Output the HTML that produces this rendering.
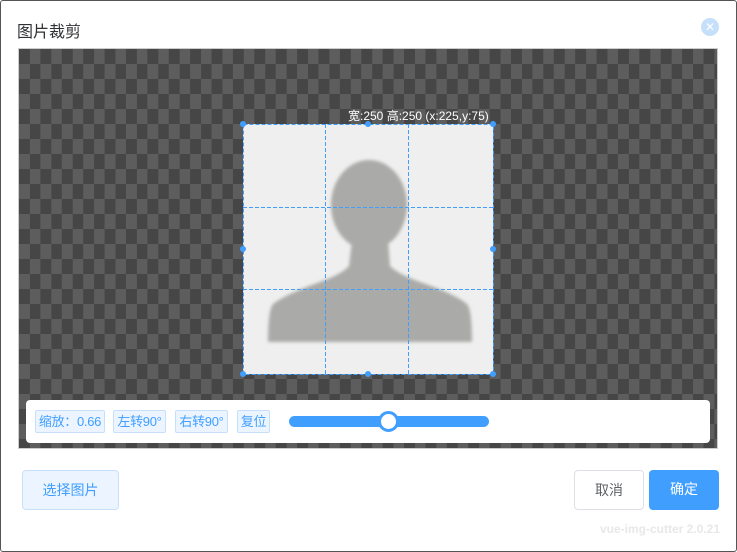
<!DOCTYPE html>
<html><head><meta charset="utf-8"><style>
*{box-sizing:border-box;margin:0;padding:0}
body{width:737px;height:552px;background:#fff;font-family:"Liberation Sans","Noto Sans CJK SC",sans-serif;position:relative;overflow:hidden}
.frame{position:absolute;left:0;top:0;width:737px;height:552px;border:1px solid #555;border-radius:3px}
.title{position:absolute;left:17px;top:18px;font-size:16px;color:#303133}
.close{position:absolute;left:701px;top:18px;width:18px;height:18px;border-radius:50%;background:#c6e0fb;color:#fff;font-size:12px;text-align:center;line-height:18px}
.stage{position:absolute;left:18px;top:48px;width:700px;height:401px;border:1px solid #ccc;background-color:#5d5d5d;
background-image:conic-gradient(#5d5d5d 25%,#464646 0 50%,#5d5d5d 0 75%,#464646 0);
background-size:21.4px 30px;background-position:0 0}
.tb{position:absolute;left:26px;top:400px;width:684px;height:43px;background:#fff;border-radius:4px}
.tag{position:absolute;top:410px;height:23px;border:1px solid #c6e0fb;background:#ecf5ff;color:#409eff;font-size:13px;line-height:21px;padding:0 2px;border-radius:2px;white-space:nowrap;overflow:hidden;text-align:center;letter-spacing:-0.3px}
.btn{position:absolute;top:470px;height:40px;border-radius:4px;font-size:14px;line-height:38px;text-align:center}
.lbl{position:absolute;left:348px;top:107px;font-size:12px;color:#fff;white-space:nowrap}
</style></head><body>
<div class="frame"></div>
<div class="title">图片裁剪</div>
<div class="close">✕</div>
<div class="stage"></div>
<svg style="position:absolute;left:0;top:0" width="737" height="552">
<defs><filter id="b"><feGaussianBlur stdDeviation="1.5"/></filter></defs>
<rect x="243" y="124" width="250" height="250" fill="#efefef"/>
<g fill="#aaaba8" filter="url(#b)">
<ellipse cx="369" cy="205" rx="38" ry="45"/>
<path d="M352 240 L388 240 L390 266 Q398 274 420 282 Q455 294 467 304 Q472 310 472 342 L268 342 Q268 310 273 304 Q286 294 320 282 Q342 274 349 266 Z"/>
</g>
<g stroke="#409eff" stroke-width="1" stroke-dasharray="4 2" fill="none">
<rect x="243.5" y="124.5" width="250" height="250"/>
<line x1="325.5" y1="124" x2="325.5" y2="374"/><line x1="408.5" y1="124" x2="408.5" y2="374"/>
<line x1="243" y1="207.5" x2="493" y2="207.5"/><line x1="243" y1="289.5" x2="493" y2="289.5"/>
</g>
<g fill="#409eff">
<circle cx="243" cy="124" r="3"/><circle cx="368" cy="124" r="3"/><circle cx="493" cy="124" r="3"/>
<circle cx="243" cy="249" r="3"/><circle cx="493" cy="249" r="3"/>
<circle cx="243" cy="374" r="3"/><circle cx="368" cy="374" r="3"/><circle cx="493" cy="374" r="3"/>
</g>
</svg>
<div class="lbl">宽:250 高:250 (x:225,y:75)</div>
<div class="tb"></div>
<div class="tag" style="left:35px;width:70px">缩放：0.66</div>
<div class="tag" style="left:113px;width:53px">左转90°</div>
<div class="tag" style="left:175px;width:53px">右转90°</div>
<div class="tag" style="left:237px;width:33px">复位</div>
<div style="position:absolute;left:289px;top:416px;width:200px;height:11px;border-radius:6px;background:#409eff"></div>
<div style="position:absolute;left:378px;top:411px;width:21px;height:21px;border-radius:50%;background:#fff;border:3px solid #409eff"></div>
<div class="btn" style="left:22px;width:97px;background:#ecf5ff;border:1px solid #c6e0fb;color:#409eff">选择图片</div>
<div class="btn" style="left:574px;width:70px;background:#fff;border:1px solid #dcdfe6;color:#606266">取消</div>
<div class="btn" style="left:649px;width:70px;background:#409eff;color:#fff">确定</div>
<div style="position:absolute;left:560px;top:522px;width:160px;text-align:right;font-size:12px;color:#e8e8e8;font-weight:bold;white-space:nowrap">vue-img-cutter 2.0.21</div>
</body></html>
